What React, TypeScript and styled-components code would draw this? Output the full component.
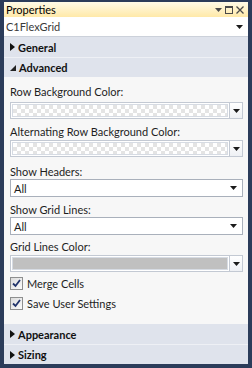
import React from 'react';
import styled, { createGlobalStyle } from 'styled-components';

const GlobalStyle = createGlobalStyle`
  html, body {
    margin: 0;
    padding: 0;
    background: #2b3c5a;
  }
  * {
    box-sizing: border-box;
  }
`;

const Frame = styled.div`
  width: 252px;
  height: 368px;
  padding: 2px 4px 4px 4px;
  background: #2b3c5a;
  font-family: Lato, 'Liberation Sans', sans-serif;
  font-size: 11px;
  color: #1b1b1b;
`;

const Panel = styled.div`
  height: 100%;
  display: flex;
  flex-direction: column;
  background: #f7f7f7;
  overflow: hidden;
`;

const TitleBar = styled.div`
  height: 15px;
  display: flex;
  align-items: center;
  padding: 0 4px 0 2px;
  background: linear-gradient(#fffbe8, #ffe9a8);
  color: #000;
`;

const TitleText = styled.span`
  flex: 1;
  line-height: 15px;
`;

const TitleButtons = styled.div`
  display: flex;
  align-items: center;
  gap: 3px;
`;

const Combo = styled.div`
  height: 20px;
  display: flex;
  align-items: center;
  padding: 0 5px 0 2px;
  background: #fff;
  border-bottom: 1px solid #ccd1da;
  color: #3a3a3a;
`;

const ComboText = styled.span`
  flex: 1;
`;

const Header = styled.div<{ $gap?: boolean }>`
  height: 20px;
  flex-shrink: 0;
  display: flex;
  align-items: center;
  gap: 3px;
  padding-left: 6px;
  background: #dfe3ec;
  font-weight: bold;
  color: #111;
  border-top: ${p => (p.$gap ? '1px solid #eef0f5' : 'none')};
`;

const Content = styled.div`
  flex: 1;
  display: flex;
  flex-direction: column;
  padding: 8px 5px 0 6px;
`;

const Label = styled.div<{ $top: number }>`
  line-height: 14px;
  margin-top: ${p => p.$top}px;
  color: #1e1e1e;
`;

const ColorField = styled.div<{ $top: number }>`
  height: 17px;
  margin-top: ${p => p.$top}px;
  display: flex;
  border: 1px solid #c3c9d3;
  background: #fff;
`;

const Swatch = styled.div<{ $fill?: string }>`
  flex: 1;
  margin: 1px;
  background-color: ${p => p.$fill ?? '#ffffff'};
  background-image: ${p =>
    p.$fill
      ? 'none'
      : 'conic-gradient(#e4e4e4 25%, #ffffff 0 50%, #e4e4e4 0 75%, #ffffff 0)'};
  background-size: 8px 8px;
  border: 1px solid #d6dbe3;
`;

const FieldButton = styled.div`
  width: 13px;
  display: flex;
  align-items: center;
  justify-content: center;
  border-left: 1px solid #c3c9d3;
  background: linear-gradient(#ffffff, #eef0f4);
`;

const Select = styled.div<{ $top: number }>`
  height: 18px;
  margin-top: ${p => p.$top}px;
  display: flex;
  align-items: center;
  padding: 0 5px 0 3px;
  background: #fff;
  border: 1px solid #a9b0bb;
`;

const SelectText = styled.span`
  flex: 1;
`;

const CheckRow = styled.label<{ $top: number }>`
  display: flex;
  align-items: center;
  gap: 4px;
  height: 16px;
  margin-top: ${p => p.$top}px;
  color: #1e1e1e;
`;

const Box = styled.span`
  width: 13px;
  height: 13px;
  display: flex;
  align-items: center;
  justify-content: center;
  border: 1px solid #8e8f8f;
  background: linear-gradient(135deg, #dcdcdc, #fbfbfb);
`;

const DownArrow = ({ color = '#1b1b1b' }: { color?: string }) => (
  <svg width="7" height="4" viewBox="0 0 7 4">
    <path d="M0 0H7L3.5 4Z" fill={color} />
  </svg>
);

const Collapsed = () => (
  <svg width="5" height="8" viewBox="0 0 5 8">
    <path d="M0 0L5 4L0 8Z" fill="#111" />
  </svg>
);

const Expanded = () => (
  <svg width="6" height="6" viewBox="0 0 6 6">
    <path d="M6 0V6H0Z" fill="#222" />
  </svg>
);

const Check = () => (
  <svg width="9" height="9" viewBox="0 0 9 9">
    <path d="M1 4.5L3.5 7L8 1" stroke="#22346b" strokeWidth="1.8" fill="none" />
  </svg>
);

const App: React.FC = () => (
  <>
    <GlobalStyle />
    <Frame>
      <Panel>
        <TitleBar>
          <TitleText>Properties</TitleText>
          <TitleButtons>
            <DownArrow color="#4a4a4a" />
            <svg width="8" height="8" viewBox="0 0 8 8">
              <rect x="0.5" y="0.5" width="7" height="7" fill="none" stroke="#4a4a4a" />
              <rect x="0" y="0" width="8" height="2" fill="#4a4a4a" />
            </svg>
            <svg width="8" height="8" viewBox="0 0 8 8">
              <path d="M0.5 0.5L7.5 7.5M7.5 0.5L0.5 7.5" stroke="#4a4a4a" strokeWidth="1.3" />
            </svg>
          </TitleButtons>
        </TitleBar>
        <Combo>
          <ComboText>C1FlexGrid</ComboText>
          <DownArrow />
        </Combo>
        <Header>
          <Collapsed />
          General
        </Header>
        <Header $gap>
          <Expanded />
          Advanced
        </Header>
        <Content>
          <Label $top={0}>Row Background Color:</Label>
          <ColorField $top={3}>
            <Swatch />
            <FieldButton>
              <DownArrow />
            </FieldButton>
          </ColorField>
          <Label $top={6}>Alternating Row Background Color:</Label>
          <ColorField $top={1}>
            <Swatch />
            <FieldButton>
              <DownArrow />
            </FieldButton>
          </ColorField>
          <Label $top={8}>Show Headers:</Label>
          <Select $top={0}>
            <SelectText>All</SelectText>
            <DownArrow />
          </Select>
          <Label $top={6}>Show Grid Lines:</Label>
          <Select $top={0}>
            <SelectText>All</SelectText>
            <DownArrow />
          </Select>
          <Label $top={5}>Grid Lines Color:</Label>
          <ColorField $top={1}>
            <Swatch $fill="#c0c0c0" />
            <FieldButton>
              <DownArrow />
            </FieldButton>
          </ColorField>
          <CheckRow $top={3}>
            <Box>
              <Check />
            </Box>
            Merge Cells
          </CheckRow>
          <CheckRow $top={4}>
            <Box>
              <Check />
            </Box>
            Save User Settings
          </CheckRow>
        </Content>
        <Header>
          <Collapsed />
          Appearance
        </Header>
        <Header $gap>
          <Collapsed />
          Sizing
        </Header>
      </Panel>
    </Frame>
  </>
);

export default App;
